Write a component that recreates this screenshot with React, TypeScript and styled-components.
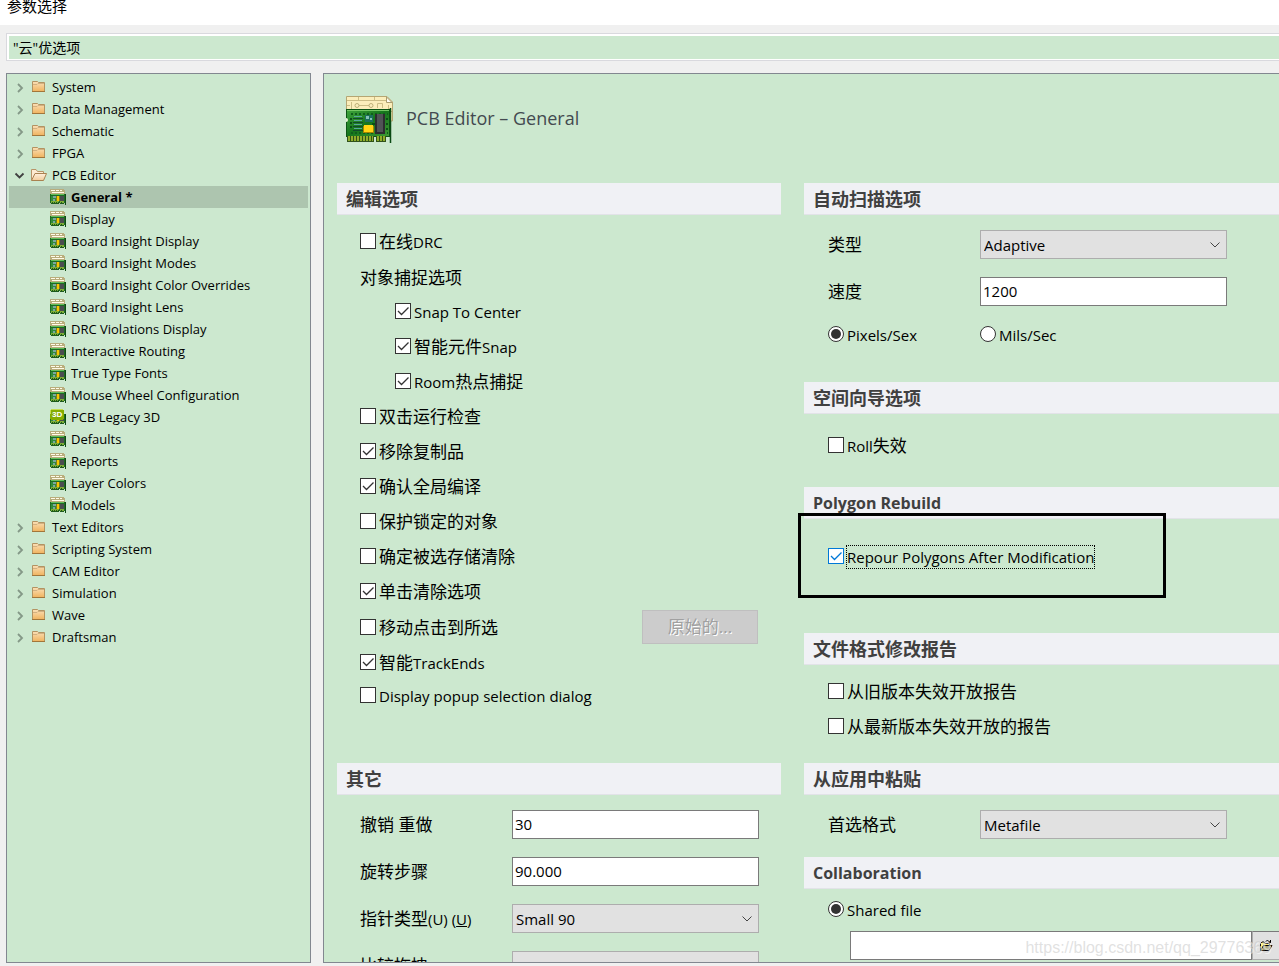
import React, { useState } from "react";
import styled, { createGlobalStyle, css } from "styled-components";

const GlobalStyle = createGlobalStyle`
  *, *::before, *::after { box-sizing: border-box; }
  body { margin: 0; background: #f0f0f0; }
  button, input, select { font: inherit; color: inherit; margin: 0; }
  h1, h2, ul { margin: 0; padding: 0; font: inherit; list-style: none; }
`;

const Window = styled.div`
  height: 100vh;
  display: flex;
  flex-direction: column;
  position: relative;
  overflow: hidden;
  background: #f0f0f0;
  color: #000;
  font-family: "Open Sans", "Noto Sans CJK SC", sans-serif;
  font-size: 17px;
  line-height: 24px;
`;

const TitleBar = styled.header`
  flex: none;
  height: 25px;
  padding-left: 7px;
  background: #fff;
  font-size: 15px;
  line-height: 12px;
`;

const CloudBar = styled.div`
  flex: none;
  height: 28px;
  margin: 8px 0 12px 6px;
  padding-left: 6px;
  border: 1px solid #d9d9de;
  border-right: 0;
  box-shadow: inset 2px 2px #fff, inset 0 -1px #fff;
  background: #cce8cf;
  font-size: 14px;
  line-height: 28px;
`;

const Body = styled.div`
  flex: 1;
  min-height: 0;
  display: flex;
  gap: 12px;
  padding: 0 0 3px 6px;
`;

const Tree = styled.nav`
  flex: none;
  width: 305px;
  padding: 2px;
  border: 1px solid #828790;
  background: #cce8cf;
  font-size: 13px;
  overflow: hidden;
`;

const TreeItem = styled.button<{ $child?: boolean; $selected?: boolean }>`
  width: 100%;
  height: 22px;
  display: flex;
  align-items: center;
  padding: 0 0 0 ${(p) => (p.$child ? 41 : 4)}px;
  border: 0;
  background: ${(p) => (p.$selected ? "#adc5af" : "none")};
  font-weight: ${(p) => (p.$selected ? 700 : 400)};
  line-height: 22px;
  white-space: nowrap;
  text-align: left;

  svg { flex: none; }
  span { margin-left: 5px; }
`;

const Main = styled.main`
  flex: 1;
  min-width: 0;
  padding: 19px 0 0 13px;
  border: 1px solid #828790;
  border-right: 0;
  background: #cce8cf;
  overflow: hidden;
`;

const PageHead = styled.div`
  display: flex;
  align-items: center;
  gap: 12px;
  height: 54px;
  margin-bottom: 36px;
  padding-left: 9px;
`;

const PageTitle = styled.h1`
  padding-bottom: 4px;
  color: #434a50;
  font-size: 18px;
`;

const Columns = styled.div`
  display: grid;
  grid-template-columns: minmax(0, 444fr) minmax(0, 475fr);
  gap: 23px;
`;

const Section = styled.section<{ $top: number; $bottom?: number }>`
  position: relative;

  > div {
    padding: ${(p) => p.$top}px 0 ${(p) => p.$bottom ?? 0}px var(--indent);
  }
`;

const Column = styled.div<{ $indent: number }>`
  --indent: ${(p) => p.$indent}px;
  display: flex;
  flex-direction: column;
`;

const SectionTitle = styled.h2`
  height: 32px;
  padding-left: 9px;
  border-bottom: 1px solid #e2e3e8;
  background: #f0f1f5;
  color: #404040;
  font-size: 18px;
  font-weight: 700;
  line-height: 32px;
`;

const LatinTitle = styled(SectionTitle)`
  font-size: 16px;
`;

const Latin = styled.span`
  font-size: 15px;
`;

const Row = styled.div<{ $h?: number; $indent?: boolean; $spread?: boolean }>`
  display: flex;
  align-items: center;
  height: ${(p) => p.$h ?? 35}px;
  padding-left: ${(p) => (p.$indent ? 35 : 0)}px;
  padding-right: ${(p) => (p.$spread ? 23 : 0)}px;
  justify-content: ${(p) => (p.$spread ? "space-between" : "flex-start")};
  white-space: nowrap;
`;

const GroupLabel = styled(Row)`
  padding-top: 4px;
`;

const FieldRow = styled.div`
  display: grid;
  grid-template-columns: 152px 247px;
  align-items: center;
  height: 47px;
  white-space: nowrap;
`;

const RadioRow = styled(FieldRow)`
  height: 38px;
`;

const Choice = styled.label<{ $focus?: boolean }>`
  display: inline-flex;
  align-items: center;
  gap: ${(p) => (p.$focus ? 2 : 3)}px;
  line-height: 22px;
`;

const Caption = styled.span<{ $focus?: boolean }>`
  margin-top: 2px;
  ${(p) =>
    p.$focus &&
    css`
      border: 1px dotted #000;
    `}
`;

const Mark = styled.span<{ $focus?: boolean }>`
  display: grid;
  width: 16px;
  height: 16px;
  color: ${(p) => (p.$focus ? "#0078d7" : "#333")};

  > * { grid-area: 1 / 1; }
  svg { pointer-events: none; }
`;

const Box = styled.input<{ $round?: boolean }>`
  appearance: none;
  width: 16px;
  height: 16px;
  border: 1px solid currentColor;
  border-radius: ${(p) => (p.$round ? "50%" : "0")};
  background: #fff;
  outline: none;
`;

const TextInput = styled.input`
  width: 100%;
  height: 29px;
  padding: 0 2px 2px;
  border: 1px solid #7a7a7a;
  border-radius: 0;
  background: #fff;
  font-size: 15px;
  outline: none;
`;

const SelectWrap = styled.span`
  display: grid;
  align-items: center;

  > * { grid-area: 1 / 1; }
  svg { justify-self: end; margin-right: 6px; pointer-events: none; }
`;

const SelectBox = styled.select`
  appearance: none;
  width: 100%;
  height: 29px;
  padding: 0 24px 0 3px;
  border: 1px solid #adadad;
  border-radius: 0;
  background: #e1e1e1;
  font-size: 15px;
`;

const PushButton = styled.button`
  width: 116px;
  height: 34px;
  border: 1px solid #bfbfbf;
  background: #ccc;
  &:disabled { color: #a0a0a0; }
  text-shadow: 1px 1px #fff;
`;

const FileRow = styled.div`
  display: flex;
  margin: 5px 0 0 22px;
  height: 29px;
`;

const BrowseButton = styled.button`
  flex: none;
  width: 27px;
  height: 29px;
  display: grid;
  place-items: center;
  padding: 0;
  border: 1px solid #adadad;
  border-top-color: #7a7a7a;
  border-right: 0;
  background: #e1e1e1;
`;

const Highlight = styled.span`
  position: absolute;
  left: -6px;
  top: 26px;
  width: 368px;
  height: 85px;
  border: 3px solid #000;
  pointer-events: none;
`;

const Watermark = styled.div`
  position: absolute;
  right: 8px;
  bottom: 6px;
  color: rgba(200, 200, 200, 0.55);
  text-shadow: 1px 1px rgba(255, 255, 255, 0.5);
  font-family: "Liberation Sans", sans-serif;
  font-size: 16px;
  pointer-events: none;
`;

const BadgeText = styled.text`
  fill: #fff;
  font-family: "Liberation Sans", sans-serif;
  font-size: 8px;
  font-weight: 700;
`;

/* Latin runs are set smaller than the Chinese characters beside them. */
function Mixed({ children }: { children: string }) {
  return (
    <>
      {children.split(/([\x21-\x7e–][\x20-\x7e–]*)/).map((part, i) =>
        i % 2 ? <Latin key={i}>{part}</Latin> : part
      )}
    </>
  );
}

function Arrow({ open }: { open?: boolean }) {
  return (
    <svg width="13" height="12" viewBox="0 0 13 12" fill="none">
      {open ? (
        <path d="M2.5 4.500 6.500 8.500 10.500 4.500" stroke="#404040" strokeWidth="1.800" />
      ) : (
        <path d="M5 3 9 7 5 11" stroke="#849887" strokeWidth="1.800" />
      )}
    </svg>
  );
}

function Folder({ open }: { open?: boolean }) {
  return (
    <svg width="21" height="16" viewBox="0 0 21 16">
      <defs>
        <linearGradient id="folderFill" x1="0" y1="0" x2="0" y2="1">
          <stop offset="0" stopColor="#fbe0b8" />
          <stop offset="1" stopColor="#f0b35e" />
        </linearGradient>
        <linearGradient id="openFill" x1="0" y1="0" x2="0" y2="1">
          <stop offset="0" stopColor="#fff0dc" />
          <stop offset="1" stopColor="#f3cd9c" />
        </linearGradient>
      </defs>
      {open ? (
        <>
          <path d="M5.500 13V2.500H10L11.500 4.500H17.500V7" fill="#fdebd2" stroke="#b89468" />
          <path d="M5.500 13.500 9 6.500H20.500L17.500 13.500Z" fill="url(#openFill)" stroke="#a98250" />
        </>
      ) : (
        <>
          <path d="M6.500 12.500V2.500H11.500L12.500 3.500H18.500V12.500Z" fill="url(#folderFill)" stroke="#b39362" />
          <path d="M7 5.500H11L12 4.500H18" fill="none" stroke="#d2b080" />
          <path d="M6 12.500H19" stroke="#a2763a" />
        </>
      )}
    </svg>
  );
}

function BoardIcon({ legacy }: { legacy?: boolean }) {
  return (
    <svg width="16" height="16" viewBox="0 0 16 16" shapeRendering="crispEdges">
      {!legacy && (
        <>
          <path d="M0 0H13L15 2V6H0Z" fill="#b8ad7c" />
          <path d="M1 1H5V2H1ZM6 1H9V2H6ZM10 1H12V2H10ZM2 3H14V4H2Z" fill="#fffbe8" />
        </>
      )}
      <path d="M0 5H15V14H0Z" fill="#1d6b22" />
      <path d="M1 5H14V6H1Z" fill="#62c05c" />
      <path d="M1 7H14V12H1Z" fill="#318b3a" />
      <path d="M3 7H6V9H3ZM3 10H5V12H3Z" fill="#7aa8a0" />
      <path d="M6 7H10V12H6Z" fill="#7c7a24" />
      <path d="M7 7H9V12H7Z" fill="#f5c800" />
      <path d="M10 7H14V12H10Z" fill="#4a4d50" />
      <path d="M1 12H9V14H1ZM10 12H14V14H10Z" fill="#7fae35" />
      <path d="M2 13H3V15H2ZM4 13H5V15H4ZM6 13H7V15H6ZM8 13H9V15H8ZM11 13H12V15H11ZM1 14H9V15H1ZM10 14H14V15H10Z" fill="#1d5a1c" />
      <path d="M15 5H16V16H15Z" fill="#0e4a14" />
      {legacy && (
        <>
          <path d="M1 0H13V1H14V10H13V11H1V10H0V1H1Z" fill="#86ad00" />
          <path d="M1 0H13V1H1ZM0 1H1V5H0Z" fill="#c4dc50" />
          <BadgeText x="2" y="8">3D</BadgeText>
        </>
      )}
    </svg>
  );
}

function BigBoardIcon() {
  return (
    <svg width="48" height="48" viewBox="0 0 48 48">
      <defs>
        <linearGradient id="pcb" x1="0" y1="0" x2="1" y2="1">
          <stop offset="0" stopColor="#3fa53c" />
          <stop offset="0.5" stopColor="#15751c" />
          <stop offset="1" stopColor="#3c9a32" />
        </linearGradient>
      </defs>
      <path d="M.5.5H41L46.500 6V25H.5Z" fill="#fbeebb" stroke="#b5a673" />
      <path d="M40.500 1V6.500H46Z" fill="#fffef5" stroke="#a99c6e" />
      <path
        d="M1 4.500H40M12.500 1V5M28.500 1V5M5.500 13V6M13 9.500H23M31.500 12V7.500H36.500V12M42.500 9V24M43 15.500H46M1 9.500H4"
        fill="none"
        stroke="#cbbd85"
      />
      <circle cx="11" cy="9.500" r="2" fill="none" stroke="#bdb078" />
      <circle cx="25" cy="9.500" r="2" fill="none" stroke="#bdb078" />
      <path d="M0 13H44V41H0Z" fill="#0d5415" />
      <path d="M1 14H43V40H1Z" fill="url(#pcb)" />
      <path d="M1 14.500H43" stroke="#72c763" />
      <path d="M0 22A2 2 0 0 1 0 26Z" fill="#e7f3d5" />
      <path d="M5 18H42M5 37H42" stroke="#0f5f1b" strokeWidth="2" strokeDasharray="2 2" />
      <path d="M4 23H6M4 27H6M4 31H6M26 28H29M40 23H42M40 28H42M40 33H42" stroke="#0b4f17" strokeWidth="2" />
      <path d="M8 20.500H16M8 24.500H16M8 28.500H16M8 32.500H16" stroke="#58a6a0" />
      <path d="M7 22.500H17M7 26.500H17M7 30.500H17M7 34.500H17" stroke="#124a2c" />
      <path d="M19 19H27V26H19Z" fill="#1c6f5d" />
      <path d="M20 20H23V23H20ZM24 22H26V24H24Z" fill="#85c2b4" />
      <path d="M17 30H28V37H17Z" fill="#a68300" />
      <path d="M18 29H27V36H18Z" fill="#ffd514" />
      <path d="M29 18H39V38H29Z" fill="#2c2e30" />
      <path d="M31 18H37V36H31Z" fill="#505356" />
      <path d="M1 40H28V46H1ZM30 40H40V46H30Z" fill="#31521a" />
      <path d="M2 42.500H27M31 42.500H39" stroke="#8fae2a" strokeWidth="5" strokeDasharray="2 1" />
      <path d="M44.500 12V47" stroke="#0b4a13" strokeWidth="1.500" />
    </svg>
  );
}

function BrowseIcon() {
  return (
    <svg width="14" height="14" viewBox="0 0 14 14">
      <path d="M1.500 11.500V4.500L3 3H5L6 4.500H10.500V6.500" fill="#fff47a" stroke="#000" />
      <path d="M1.500 11.500 4.500 6.500H13L10 11.500Z" fill="#a8a77a" stroke="#000" />
      <path d="M6.500 2.500 8.500 1.500 11.500 3.500V1M11.500 3.500H9.500" fill="none" stroke="#000" />
    </svg>
  );
}

interface CheckProps {
  label: string;
  on?: boolean;
  focus?: boolean;
}

function Check({ label, on = false, focus }: CheckProps) {
  const [checked, setChecked] = useState(on);
  return (
    <Choice $focus={focus}>
      <Mark $focus={focus}>
        <Box type="checkbox" checked={checked} onChange={() => setChecked(!checked)} />
        {checked && (
          <svg width="16" height="16" viewBox="0 0 16 16" fill="none">
            <path d="M3 8 6.500 11.500 13.500 4.500" stroke="currentColor" strokeWidth="1.300" />
          </svg>
        )}
      </Mark>
      <Caption $focus={focus}>
        <Mixed>{label}</Mixed>
      </Caption>
    </Choice>
  );
}

interface RadioProps {
  label: string;
  name: string;
  checked: boolean;
  onPick: () => void;
}

function Radio({ label, name, checked, onPick }: RadioProps) {
  return (
    <Choice>
      <Mark>
        <Box type="radio" $round name={name} checked={checked} onChange={onPick} />
        {checked && (
          <svg width="16" height="16" viewBox="0 0 16 16">
            <circle cx="8" cy="8" r="5" fill="currentColor" />
          </svg>
        )}
      </Mark>
      <Caption>
        <Mixed>{label}</Mixed>
      </Caption>
    </Choice>
  );
}

function Select({ id, value }: { id: string; value?: string }) {
  return (
    <SelectWrap>
      <SelectBox id={id} defaultValue={value}>
        {value && <option>{value}</option>}
      </SelectBox>
      <svg width="12" height="12" viewBox="0 0 12 12" fill="none">
        <path d="M1.500 3.500 6 8 10.500 3.500" stroke="#444" />
      </svg>
    </SelectWrap>
  );
}

const before = ["System", "Data Management", "Schematic", "FPGA"];
const pages = [
  "General *",
  "Display",
  "Board Insight Display",
  "Board Insight Modes",
  "Board Insight Color Overrides",
  "Board Insight Lens",
  "DRC Violations Display",
  "Interactive Routing",
  "True Type Fonts",
  "Mouse Wheel Configuration",
  "PCB Legacy 3D",
  "Defaults",
  "Reports",
  "Layer Colors",
  "Models",
];
const after = ["Text Editors", "Scripting System", "CAM Editor", "Simulation", "Wave", "Draftsman"];

function Group({ name, open, children }: { name: string; open?: boolean; children?: React.ReactNode }) {
  return (
    <li>
      <TreeItem aria-expanded={!!open}>
        <Arrow open={open} />
        <Folder open={open} />
        <span>{name}</span>
      </TreeItem>
      {children}
    </li>
  );
}

export default function App() {
  const [unit, setUnit] = useState("Pixels/Sex");
  return (
    <Window>
      <GlobalStyle />
      <TitleBar>参数选择</TitleBar>
      <CloudBar>"云"优选项</CloudBar>
      <Body>
        <Tree>
          <ul>
            {before.map((name) => (
              <Group key={name} name={name} />
            ))}
            <Group name="PCB Editor" open>
              <ul>
                {pages.map((page, i) => (
                  <li key={page}>
                    <TreeItem $child $selected={i === 0}>
                      <BoardIcon legacy={page === "PCB Legacy 3D"} />
                      <span>{page}</span>
                    </TreeItem>
                  </li>
                ))}
              </ul>
            </Group>
            {after.map((name) => (
              <Group key={name} name={name} />
            ))}
          </ul>
        </Tree>
        <Main>
          <PageHead>
            <BigBoardIcon />
            <PageTitle>PCB Editor – General</PageTitle>
          </PageHead>
          <Columns>
            <Column $indent={23}>
              <Section $top={8} $bottom={52}>
                <SectionTitle>编辑选项</SectionTitle>
                <div>
                  <Row><Check label="在线DRC" /></Row>
                  <GroupLabel>对象捕捉选项</GroupLabel>
                  <Row $indent><Check label="Snap To Center" on /></Row>
                  <Row $indent><Check label="智能元件Snap" on /></Row>
                  <Row $indent><Check label="Room热点捕捉" on /></Row>
                  <Row><Check label="双击运行检查" /></Row>
                  <Row><Check label="移除复制品" on /></Row>
                  <Row><Check label="确认全局编译" on /></Row>
                  <Row><Check label="保护锁定的对象" /></Row>
                  <Row><Check label="确定被选存储清除" /></Row>
                  <Row $h={36}><Check label="单击清除选项" on /></Row>
                  <Row $spread>
                    <Check label="移动点击到所选" />
                    <PushButton disabled>原始的...</PushButton>
                  </Row>
                  <Row><Check label="智能TrackEnds" on /></Row>
                  <Row $h={32}><Check label="Display popup selection dialog" /></Row>
                </div>
              </Section>
              <Section $top={6}>
                <SectionTitle>其它</SectionTitle>
                <div>
                  <FieldRow>
                    <label htmlFor="undo">撤销 重做</label>
                    <TextInput id="undo" defaultValue="30" />
                  </FieldRow>
                  <FieldRow>
                    <label htmlFor="rotation">旋转步骤</label>
                    <TextInput id="rotation" defaultValue="90.000" />
                  </FieldRow>
                  <FieldRow>
                    <label htmlFor="cursor">
                      指针类型<Latin>(U) (<u>U</u>)</Latin>
                    </label>
                    <Select id="cursor" value="Small 90" />
                  </FieldRow>
                  <FieldRow>
                    <label htmlFor="drag">比较拖拽</label>
                    <Select id="drag" />
                  </FieldRow>
                </div>
              </Section>
            </Column>
            <Column $indent={24}>
              <Section $top={6} $bottom={29}>
                <SectionTitle>自动扫描选项</SectionTitle>
                <div>
                  <FieldRow>
                    <label htmlFor="style">类型</label>
                    <Select id="style" value="Adaptive" />
                  </FieldRow>
                  <FieldRow>
                    <label htmlFor="speed">速度</label>
                    <TextInput id="speed" defaultValue="1200" />
                  </FieldRow>
                  <RadioRow>
                    {["Pixels/Sex", "Mils/Sec"].map((u) => (
                      <Radio key={u} name="unit" label={u} checked={unit === u} onPick={() => setUnit(u)} />
                    ))}
                  </RadioRow>
                </div>
              </Section>
              <Section $top={13} $bottom={25}>
                <SectionTitle>空间向导选项</SectionTitle>
                <div>
                  <Row><Check label="Roll失效" /></Row>
                </div>
              </Section>
              <Section $top={19} $bottom={60}>
                <LatinTitle>Polygon Rebuild</LatinTitle>
                <div>
                  <Row><Check label="Repour Polygons After Modification" on focus /></Row>
                </div>
                <Highlight />
              </Section>
              <Section $top={8} $bottom={20}>
                <SectionTitle>文件格式修改报告</SectionTitle>
                <div>
                  <Row><Check label="从旧版本失效开放报告" /></Row>
                  <Row><Check label="从最新版本失效开放的报告" /></Row>
                </div>
              </Section>
              <Section $top={6} $bottom={9}>
                <SectionTitle>从应用中粘贴</SectionTitle>
                <div>
                  <FieldRow>
                    <label htmlFor="format">首选格式</label>
                    <Select id="format" value="Metafile" />
                  </FieldRow>
                </div>
              </Section>
              <Section $top={2}>
                <LatinTitle>Collaboration</LatinTitle>
                <div>
                  <Row><Radio name="share" label="Shared file" checked onPick={() => undefined} /></Row>
                  <FileRow>
                    <TextInput aria-label="Shared file" />
                    <BrowseButton aria-label="Browse"><BrowseIcon /></BrowseButton>
                  </FileRow>
                </div>
              </Section>
            </Column>
          </Columns>
        </Main>
      </Body>
      <Watermark>https://blog.csdn.net/qq_29776369</Watermark>
    </Window>
  );
}
